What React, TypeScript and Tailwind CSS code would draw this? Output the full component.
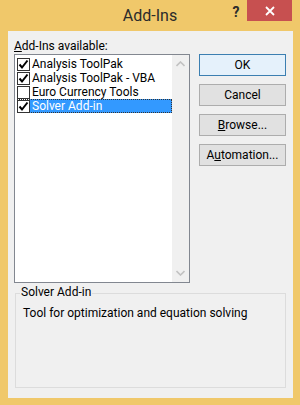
import { FC } from "react";

const items = [
    { name: "Analysis ToolPak", checked: true },
    { name: "Analysis ToolPak - VBA", checked: true },
    { name: "Euro Currency Tools", checked: false },
    { name: "Solver Add-in", checked: true, selected: true },
]

const CheckBox: FC<{ checked: boolean }> = ({ checked }) => (
    <div className="w-[13px] h-[13px] border border-[#333333] bg-white flex items-center justify-center shrink-0">
        {checked && (
            <svg width="11" height="11" viewBox="0 0 11 11">
                <path d="M1.5 5.5 L4 8.5 L9.5 1.5" fill="none" stroke="#000" strokeWidth="2" />
            </svg>
        )}
    </div>
)

const Chevron: FC<{ up?: boolean }> = ({ up }) => (
    <svg width="9" height="6" viewBox="0 0 9 6">
        <path d={up ? "M0.5 5 L4.5 1 L8.5 5" : "M0.5 1 L4.5 5 L8.5 1"} fill="none" stroke="#c2c2c2" strokeWidth="1.6" />
    </svg>
)

const Button: FC<{ def?: boolean; children: React.ReactNode }> = ({ def, children }) => (
    <div className={"h-[22px] w-[87px] flex items-center justify-center border text-[12px] text-black " +
        (def ? "border-[#3c7fb1] bg-[#e5f1fb]" : "border-[#adadad] bg-[#e1e1e1]")}>
        {children}
    </div>
)

export default function App() {
    return (
        <div className="w-[300px] h-[405px] bg-[#f0c86a] flex flex-col" style={{ fontFamily: 'Roboto, sans-serif' }}>
            {/* title bar */}
            <div className="h-[31px] flex shrink-0">
                <div className="w-[75px]" />
                <div className="flex-1 text-center text-[16px] text-[#2b2b2b] pt-[6px] leading-[19px]">Add-Ins</div>
                <div className="w-[75px] flex items-start">
                    <div className="w-[22px] text-center text-[14px] font-bold text-[#2b2b2b] pt-[2px] leading-[20px]">?</div>
                    <div className="w-[45px] h-[21px] bg-[#c75050] flex items-center justify-center">
                        <svg width="10" height="10" viewBox="0 0 10 10">
                            <path d="M1 1 L9 9 M9 1 L1 9" stroke="#fff" strokeWidth="1.8" />
                        </svg>
                    </div>
                </div>
            </div>

            {/* client area */}
            <div className="flex-1 ml-[8px] mr-[7px] mb-[7px] bg-[#f0f0f0] flex flex-col pl-[6px] text-[12px] text-black">
                <div className="mt-[8px] leading-[15px]"><span className="underline">A</span>dd-Ins available:</div>
                <div className="flex">
                    <div className="w-[176px] h-[229px] border border-[#828790] bg-white flex">
                        <div className="flex-1 pt-[2px] pl-[2px]">
                            {items.map(it => (
                                <div key={it.name} className={"h-[14px] flex items-center " + (it.selected ? "outline outline-1 outline-dotted outline-[#333] -outline-offset-1" : "")}>
                                    <CheckBox checked={it.checked} />
                                    <div className={"h-[14px] flex-1 pl-[2px] leading-[14px] whitespace-nowrap " + (it.selected ? "bg-[#3399ff] text-white" : "")}>{it.name}</div>
                                </div>
                            ))}
                        </div>
                        <div className="w-[17px] bg-[#f0f0f0] flex flex-col items-center justify-between py-[6px]">
                            <Chevron up />
                            <Chevron />
                        </div>
                    </div>
                    <div className="ml-[9px] flex flex-col gap-[8px]">
                        <Button def>OK</Button>
                        <Button>Cancel</Button>
                        <Button><span><span className="underline">B</span>rowse...</span></Button>
                        <Button><span>A<span className="underline">u</span>tomation...</span></Button>
                    </div>
                </div>

                {/* description group */}
                <div className="mt-[10px] ml-[1px] w-[271px] h-[95px] border border-[#dcdcdc] relative">
                    <div className="absolute -top-[9px] left-[4px] bg-[#f0f0f0] px-[1px] leading-[15px]">Solver Add-in</div>
                    <div className="pt-[12px] pl-[7px] leading-[15px]">Tool for optimization and equation solving</div>
                </div>
            </div>
        </div>
    )
}
